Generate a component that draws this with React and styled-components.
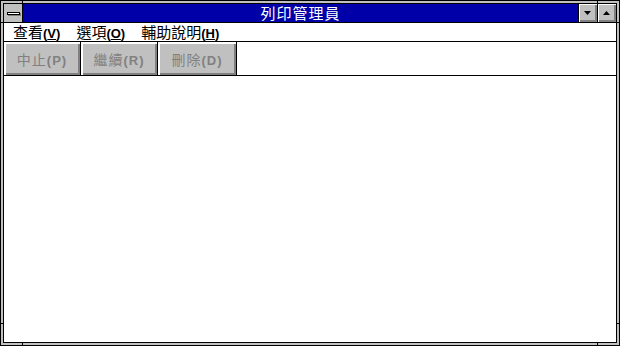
import styled, { createGlobalStyle } from "styled-components";

const GlobalStyle = createGlobalStyle`
  body {
    margin: 0;
    background: #ffffff;
    font-family: "Noto Sans CJK TC", "Liberation Sans", sans-serif;
  }
`;

const menus = [
  { label: "查看", key: "V" },
  { label: "選項", key: "O" },
  { label: "輔助說明", key: "H" },
];

const buttons = [
  { label: "中止", key: "P" },
  { label: "繼續", key: "R" },
  { label: "刪除", key: "D" },
];

export default function App() {
  return (
    <>
      <GlobalStyle />
      <Window>
        <Tick $side="top" $at={22} />
        <Tick $side="top" $at={597} />
        <Tick $side="bottom" $at={22} />
        <Tick $side="bottom" $at={597} />
        <Tick $side="left" $at={22} />
        <Tick $side="left" $at={323} />
        <Tick $side="right" $at={22} />
        <Tick $side="right" $at={323} />
        <Inner>
          <TitleBar>
            <SysMenu>
              <SysBar />
            </SysMenu>
            <Caption>列印管理員</Caption>
            <SizeBtn>
              <svg width="8" height="4" viewBox="0 0 8 4">
                <polygon points="0,0 7,0 3.5,4" fill="#000" />
              </svg>
            </SizeBtn>
            <SizeBtn>
              <svg width="8" height="4" viewBox="0 0 8 4">
                <polygon points="0,4 7,4 3.5,0" fill="#000" />
              </svg>
            </SizeBtn>
          </TitleBar>
          <MenuBar>
            {menus.map((m) => (
              <MenuItem key={m.key}>
                {m.label}
                <Accel>
                  (<u>{m.key}</u>)
                </Accel>
              </MenuItem>
            ))}
          </MenuBar>
          <Toolbar>
            <ButtonGroup>
              {buttons.map((b) => (
                <PushButton key={b.key} disabled>
                  {b.label}
                  <Accel>({b.key})</Accel>
                </PushButton>
              ))}
            </ButtonGroup>
          </Toolbar>
          <QueueArea />
        </Inner>
      </Window>
    </>
  );
}

const Window = styled.div`
  position: relative;
  box-sizing: border-box;
  width: 620px;
  height: 346px;
  background: #c0c0c0;
  border: 1px solid #000;
  padding: 2px;
`;

const Tick = styled.span`
  position: absolute;
  background: #000;
  ${({ $side, $at }) =>
    $side === "top" || $side === "bottom"
      ? `${$side}: 0; left: ${$at - 1}px; width: 1px; height: 3px;`
      : `${$side}: 0; top: ${$at - 1}px; width: 3px; height: 1px;`}
`;

const Inner = styled.div`
  box-sizing: border-box;
  height: 100%;
  border: 1px solid #000;
  display: flex;
  flex-direction: column;
  background: #fff;
`;

const TitleBar = styled.div`
  display: flex;
  height: 18px;
  border-bottom: 1px solid #000;
  flex-shrink: 0;
`;

const SysMenu = styled.div`
  width: 18px;
  background: #c0c0c0;
  border-right: 1px solid #000;
  display: flex;
  align-items: center;
  justify-content: center;
`;

const SysBar = styled.div`
  width: 11px;
  height: 1px;
  background: #fff;
  border: 1px solid #000;
  box-shadow: 1px 1px 0 #808080;
`;

const Caption = styled.div`
  flex: 1;
  background: #0000a8;
  color: #fff;
  font-size: 15px;
  line-height: 18px;
  text-align: center;
  letter-spacing: 1px;
`;

const SizeBtn = styled.div`
  box-sizing: border-box;
  width: 19px;
  border-left: 1px solid #000;
  background: #c0c0c0;
  display: flex;
  align-items: center;
  justify-content: center;
  box-shadow: inset 1px 1px 0 #fff, inset -1px -1px 0 #808080,
    inset -2px -2px 0 #808080;
`;

const MenuBar = styled.div`
  display: flex;
  gap: 16px;
  height: 18px;
  padding-left: 9px;
  border-bottom: 1px solid #000;
  flex-shrink: 0;
`;

const MenuItem = styled.div`
  font-size: 15px;
  line-height: 18px;
  color: #000;
  white-space: nowrap;
`;

const Accel = styled.span`
  font-family: "Liberation Sans", sans-serif;
  font-weight: bold;
  font-size: 13px;
`;

const Toolbar = styled.div`
  display: flex;
  height: 33px;
  border-bottom: 1px solid #000;
  flex-shrink: 0;
`;

const ButtonGroup = styled.div`
  display: flex;
  border-right: 1px solid #000;
  background: #000;
  gap: 1px;
`;

const PushButton = styled.button`
  box-sizing: border-box;
  width: 76px;
  height: 33px;
  margin: 0;
  padding: 0;
  border: none;
  background: #c0c0c0;
  color: #808080;
  font-family: "Noto Sans CJK TC", "Liberation Sans", sans-serif;
  font-size: 14px;
  letter-spacing: 1px;
  box-shadow: inset 1px 1px 0 #fff, inset 2px 2px 0 #fff,
    inset -1px -1px 0 #808080, inset -2px -2px 0 #808080;
  &:nth-child(3) {
    width: 78px;
  }
`;

const QueueArea = styled.div`
  flex: 1;
  background: #fff;
`;
